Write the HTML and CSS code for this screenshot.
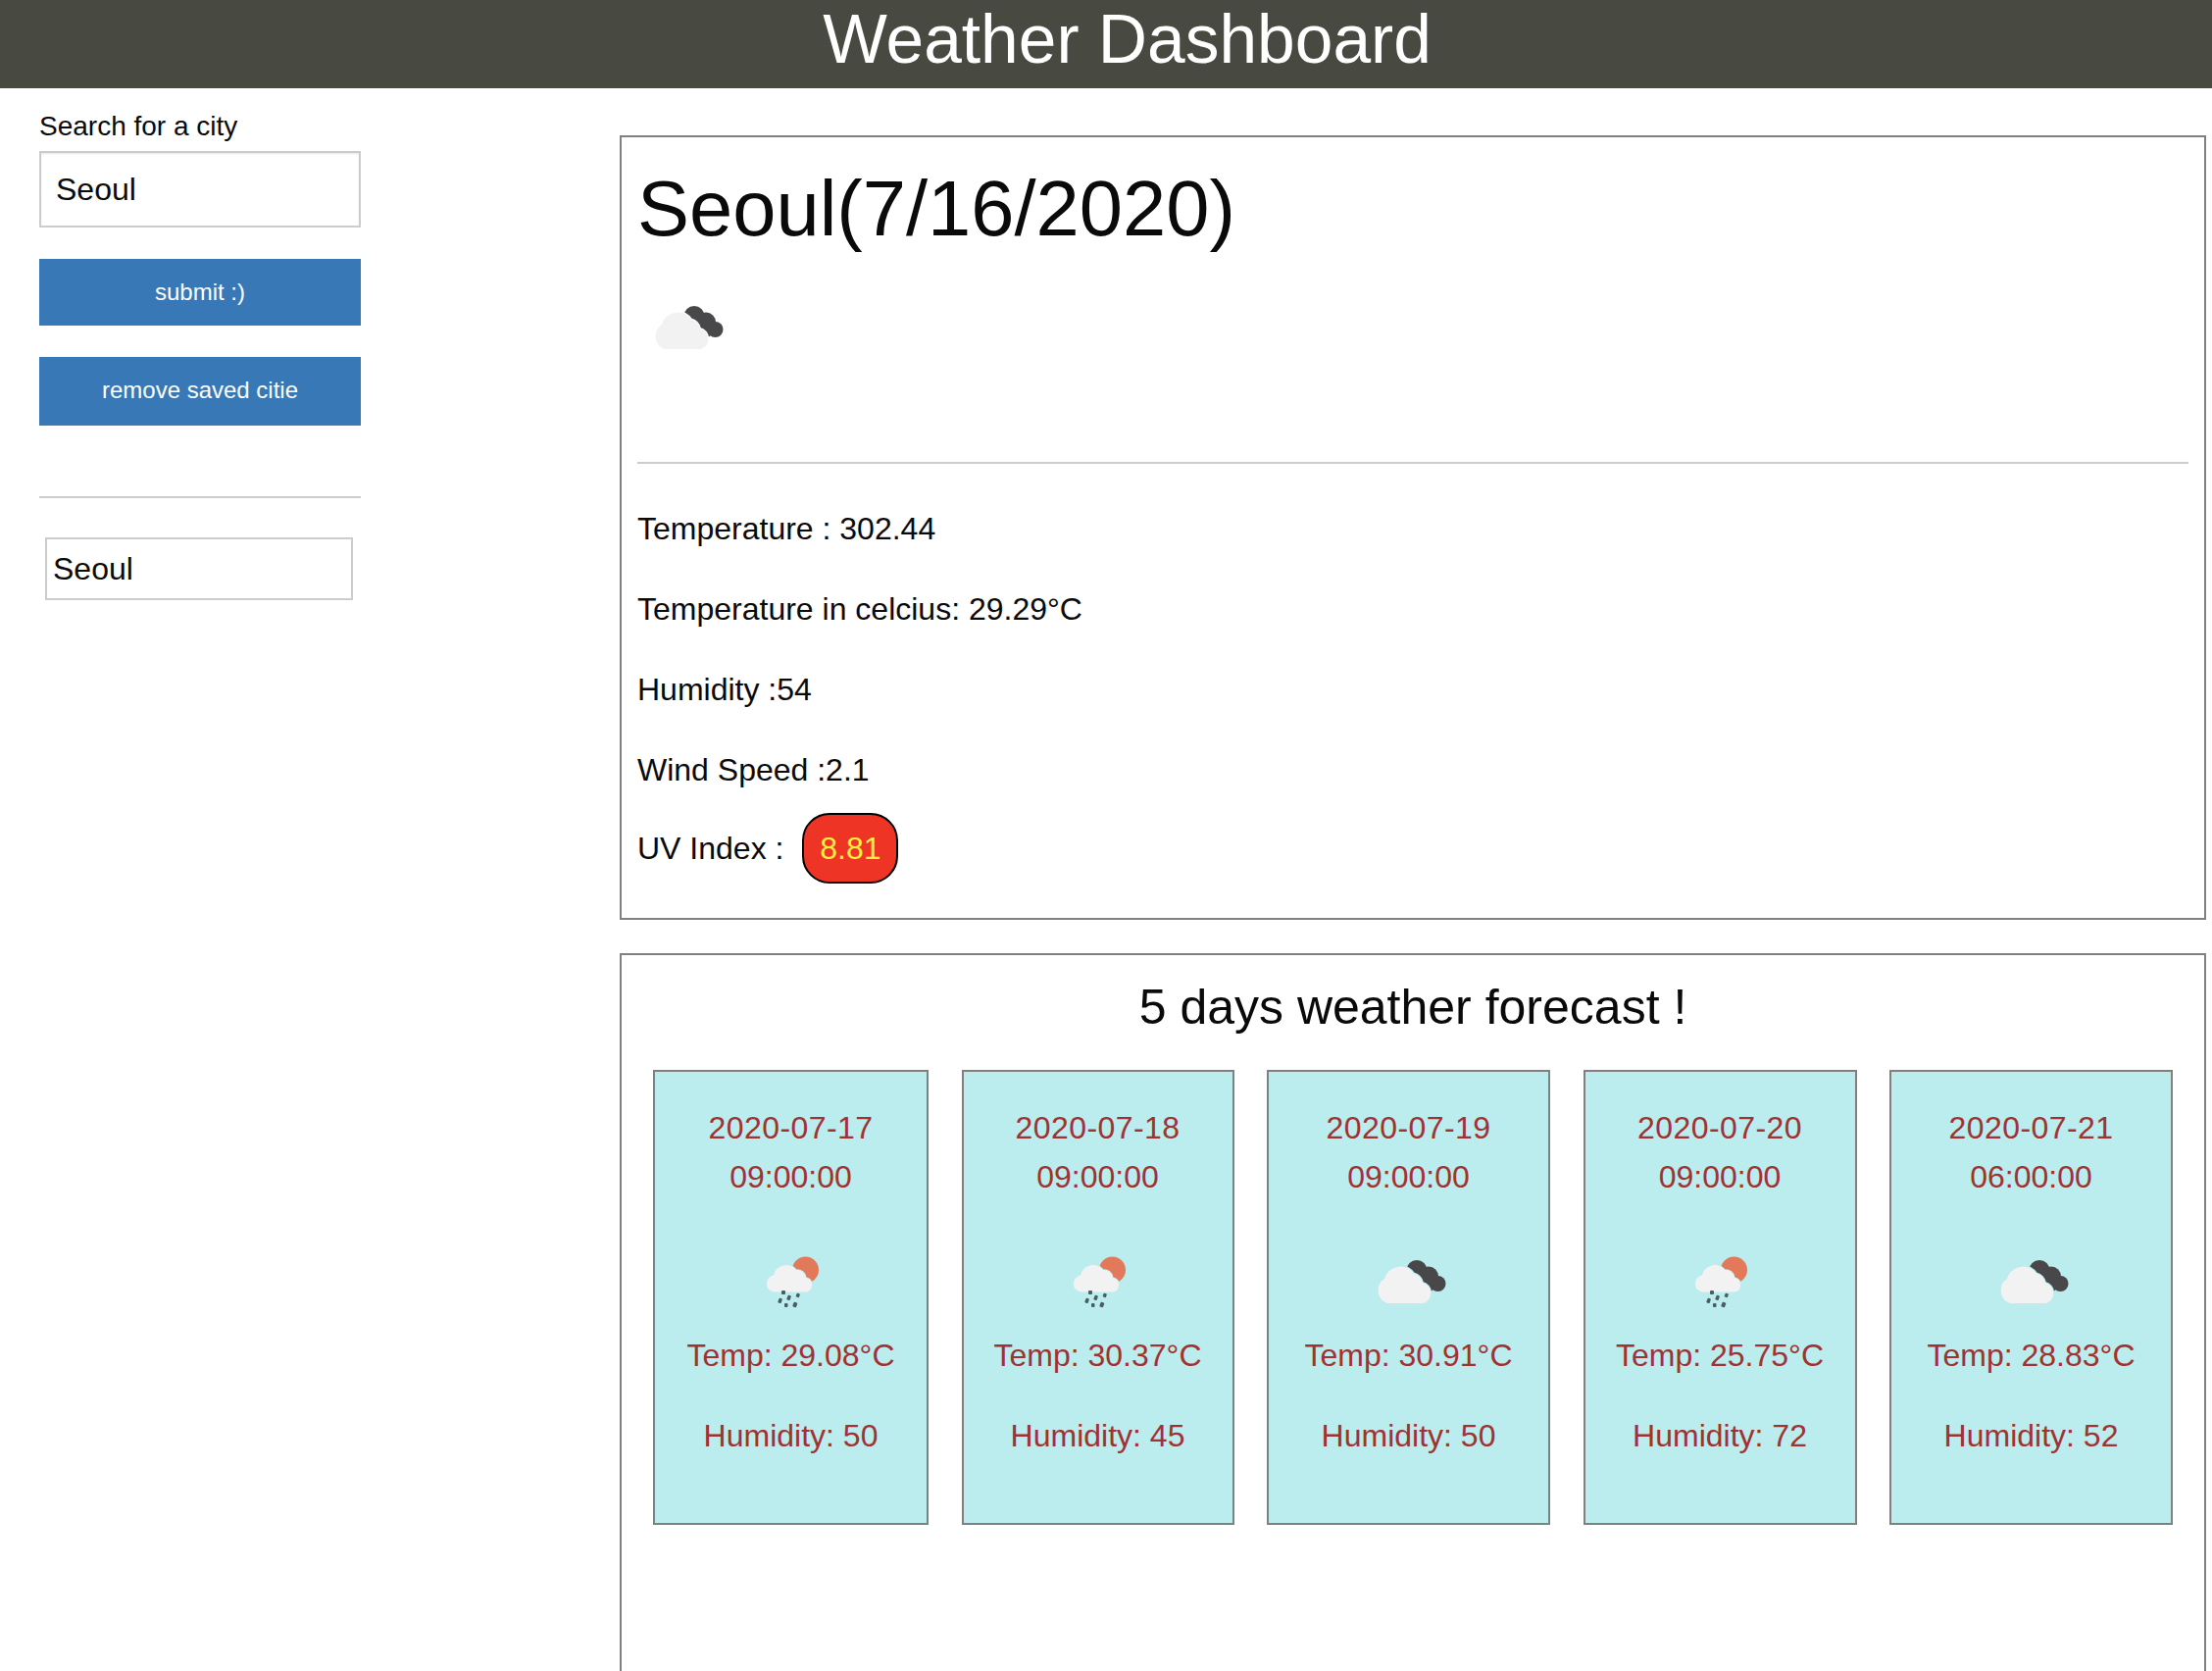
FILE: index.html
```html
<!DOCTYPE html>
<html lang="en">
<head>
    <meta charset="UTF-8">
    <meta name="viewport" content="width=device-width, initial-scale=1.0">
    <title>Weather Dashboard</title>
    <link rel="stylesheet" href="styles.css">
</head>
<body>
    <!-- Icon shapes, reused below -->
    <svg class="icon-defs" width="0" height="0">
        <symbol id="icon-clouds" viewBox="0 0 100 100">
            <g fill="#48484a">
                <circle cx="58" cy="36.500" r="10.500"/>
                <circle cx="70" cy="42.500" r="10"/>
                <circle cx="79.500" cy="50" r="8"/>
                <path d="M52 38 64 30 87 48 72 58z"/>
            </g>
            <path d="M28 70a14 14 0 0 1-3-25 17 17 0 0 1 30-5.500 13 13 0 0 1 9 9.500 11 11 0 0 1 1 21z" fill="#f2f2f2" stroke="currentColor" stroke-width="2" paint-order="stroke"/>
        </symbol>
        <symbol id="icon-rain" viewBox="0 0 100 100">
            <circle cx="64.500" cy="36" r="13.500" fill="#e2795a"/>
            <path d="M33 58.500A8.500 8.500 0 0 1 32 41.600 13 13 0 0 1 55 36 9 9 0 0 1 65 44 7.500 7.500 0 0 1 66 58.500z" fill="#f2f2f2" stroke="currentColor" stroke-width="1.500" paint-order="stroke"/>
            <g fill="#4d5c62">
                <rect x="40" y="57" width="4" height="4" rx="1"/>
                <rect x="37" y="65" width="3.500" height="5" rx="1" transform="rotate(20 39 67)"/>
                <rect x="46" y="62" width="3.500" height="5" rx="1" transform="rotate(20 48 64)"/>
                <rect x="55" y="60" width="3.500" height="4" rx="1" transform="rotate(20 57 62)"/>
                <rect x="43" y="70" width="3.500" height="4" rx="1"/>
                <rect x="52" y="69" width="4" height="5" rx="1" transform="rotate(20 54 71)"/>
            </g>
        </symbol>
    </svg>

    <header class="top-bar">
        <h1>Weather Dashboard</h1>
    </header>

    <div class="layout">
        <!-- Search column -->
        <aside class="sidebar">
            <label class="search-label" for="city">Search for a city</label>
            <input class="search-input" type="text" id="city" value="Seoul">
            <button class="action-btn submit-btn">submit :)</button>
            <button class="action-btn remove-btn">remove saved citie</button>
            <hr class="side-rule">
            <button class="saved-city">Seoul</button>
        </aside>

        <main class="content">
            <!-- Today -->
            <section class="panel today">
                <h2 class="city-title">Seoul(7/16/2020)</h2>
                <svg class="weather-icon on-white"><use href="#icon-clouds"/></svg>
                <hr class="today-rule">
                <p class="stat">Temperature : 302.44</p>
                <p class="stat">Temperature in celcius: 29.29°C</p>
                <p class="stat">Humidity :54</p>
                <p class="stat">Wind Speed :2.1</p>
                <p class="stat uv-row">UV Index : <span class="uv-badge">8.81</span></p>
            </section>

            <!-- Forecast -->
            <section class="panel forecast">
                <h3 class="forecast-title">5 days weather forecast !</h3>
                <div class="cards">
                    <div class="card w-281">
                        <div class="card-date"><span class="card-day">2020-07-17</span><br>09:00:00</div>
                        <svg class="weather-icon"><use href="#icon-rain"/></svg>
                        <p class="card-line">Temp: 29.08°C</p>
                        <p class="card-line">Humidity: 50</p>
                    </div>
                    <div class="card w-278">
                        <div class="card-date"><span class="card-day">2020-07-18</span><br>09:00:00</div>
                        <svg class="weather-icon"><use href="#icon-rain"/></svg>
                        <p class="card-line">Temp: 30.37°C</p>
                        <p class="card-line">Humidity: 45</p>
                    </div>
                    <div class="card w-289">
                        <div class="card-date"><span class="card-day">2020-07-19</span><br>09:00:00</div>
                        <svg class="weather-icon"><use href="#icon-clouds"/></svg>
                        <p class="card-line">Temp: 30.91°C</p>
                        <p class="card-line">Humidity: 50</p>
                    </div>
                    <div class="card w-279">
                        <div class="card-date"><span class="card-day">2020-07-20</span><br>09:00:00</div>
                        <svg class="weather-icon"><use href="#icon-rain"/></svg>
                        <p class="card-line">Temp: 25.75°C</p>
                        <p class="card-line">Humidity: 72</p>
                    </div>
                    <div class="card w-289">
                        <div class="card-date"><span class="card-day">2020-07-21</span><br>06:00:00</div>
                        <svg class="weather-icon"><use href="#icon-clouds"/></svg>
                        <p class="card-line">Temp: 28.83°C</p>
                        <p class="card-line">Humidity: 52</p>
                    </div>
                </div>
            </section>
        </main>
    </div>
</body>
</html>
```

FILE: styles.css
```css
html {
    height: 100%;
    overflow: hidden;
}
body {
    font-family: "Liberation Sans", Arial, sans-serif;
    margin: 0;
    padding: 0;
    background-color: #fff;
    color: #0a0a0a;
}
.icon-defs {
    display: block;
    height: 0;
}
.top-bar {
    height: 90px;
    background-color: #484940;
    color: #fff;
    text-align: center;
    padding-left: 43px;
}
.top-bar h1 {
    margin: 0;
    font-size: 69.5px;
    font-weight: normal;
    line-height: 81px;
}
.layout {
    display: flex;
    align-items: flex-start;
}
.sidebar {
    flex: 0 0 328px;
    min-width: 0;
    display: flex;
    flex-direction: column;
    margin: 0 264px 0 40px;
    padding-top: 23px;
}
.search-label {
    font-size: 28px;
    line-height: 32px;
    margin-bottom: 9px;
}
.search-input {
    box-sizing: border-box;
    width: 100%;
    height: 78px;
    padding: 0 15px;
    border: 2px solid #ccc;
    font-family: inherit;
    font-size: 32px;
    color: #0a0a0a;
    box-shadow: inset 0 1px 2px rgba(0, 0, 0, 0.1);
    margin-bottom: 32px;
}
.action-btn {
    border: none;
    padding: 0;
    background-color: #3878b6;
    color: #fefefe;
    font-family: inherit;
    font-size: 24px;
}
.submit-btn {
    height: 68px;
    margin-bottom: 32px;
}
.remove-btn {
    height: 70px;
    padding-bottom: 2px;
}
.side-rule {
    width: 100%;
    height: 2px;
    border: none;
    background-color: #ccc;
    margin: 72px 0 40px;
}
.saved-city {
    box-sizing: border-box;
    width: 314px;
    height: 64px;
    margin-left: 6px;
    padding: 0 6px;
    border: 2px solid #ccc;
    background-color: #fff;
    font-family: inherit;
    font-size: 32px;
    color: #0a0a0a;
    text-align: left;
}
.content {
    flex: 0 0 1618px;
    padding-top: 48px;
}
.panel {
    box-sizing: border-box;
    border: 2px solid #808080;
    background-color: #fff;
}
.today {
    height: 800px;
    padding: 0 16px;
    margin-bottom: 34px;
}
.city-title {
    margin: 29px 0 29px;
    font-size: 79.5px;
    font-weight: normal;
    line-height: 88px;
}
.weather-icon {
    display: block;
    width: 100px;
    height: 100px;
    margin: 0 auto;
    color: #bbecee;
    filter: blur(0.5px);
}
.weather-icon.on-white {
    margin: 0;
    color: #fff;
}
.today-rule {
    height: 2px;
    border: none;
    background-color: #ccc;
    margin: 85px 0 43px;
}
.stat {
    margin: 0 0 36px;
    font-size: 32px;
    line-height: 46px;
}
.uv-row {
    display: flex;
    align-items: center;
    gap: 19px;
    height: 72px;
    margin-top: -15px;
}
.uv-badge {
    box-sizing: border-box;
    width: 98px;
    height: 72px;
    border: 2px solid #000;
    border-radius: 28px;
    background-color: #ee3424;
    color: #ffee44;
    text-align: center;
    line-height: 69px;
}
.forecast {
    height: 800px;
}
.forecast-title {
    margin: 24px 0 35px;
    font-size: 50px;
    font-weight: normal;
    line-height: 58px;
    text-align: center;
}
.cards {
    display: flex;
    justify-content: center;
    gap: 33.5px;
}
.card {
    box-sizing: border-box;
    height: 464px;
    padding-top: 32px;
    border: 2px solid #808080;
    background-color: #bbecee;
    color: #a03232;
    font-size: 32px;
    text-align: center;
}
.card-date {
    line-height: 50px;
    margin-bottom: 34px;
}
.card-day {
    letter-spacing: 0.45px;
}
.card-line {
    margin: 0 0 36px;
    line-height: 46px;
}
.w-278 { width: 278px; }
.w-279 { width: 279px; }
.w-281 { width: 281px; }
.w-289 { width: 289px; }
```
